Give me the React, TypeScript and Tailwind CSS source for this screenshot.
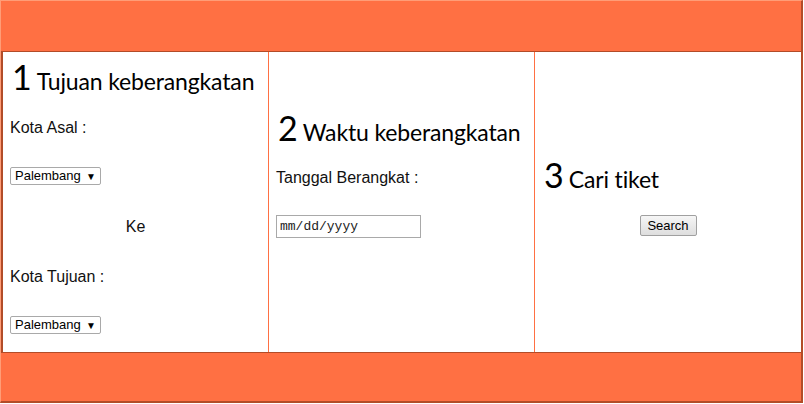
import { ReactNode } from "react";

const body = "font-['Liberation_Sans',Arial,sans-serif]";

function Heading({ num, text }: { num: string; text: string }) {
  return (
    <div className="h-[40px] leading-[40px] whitespace-nowrap font-['Lato','Open_Sans',sans-serif] [font-variant-ligatures:none] text-black">
      <span className="text-[34px] ml-[2px]">{num}</span>
      <span className="text-[23px] tracking-[-0.15px] ml-[5px]">{text}</span>
    </div>
  );
}

function Label({ children, className = "" }: { children: ReactNode; className?: string }) {
  return <div className={`${body} text-[16px] leading-[20px] text-[#111] ${className}`}>{children}</div>;
}

function CitySelect({ className = "" }: { className?: string }) {
  return (
    <div className={`relative w-[91px] h-[18px] ${className}`}>
      <select
        defaultValue="Palembang"
        className={`${body} appearance-none block w-full h-[18px] bg-white border border-[#a9a9a9] rounded-[2px] pl-[4px] text-[13px] leading-[16px] text-black outline-none`}
      >
        <option>Palembang</option>
        <option>Jakarta</option>
        <option>Bandung</option>
      </select>
      <span className="absolute right-[5px] inset-y-0 flex items-center text-[10px] text-black pointer-events-none">▼</span>
    </div>
  );
}

export default function App() {
  return (
    <div className="w-[803px] h-[403px] bg-white flex flex-col border-t border-l border-t-[#ff9d77] border-l-[#ff9d77] border-r-2 border-b-2 border-r-[#b24c28] border-b-[#b24c28]">
      <div className="h-[51px] bg-[#ff7043] border-b border-[#b24c28]" />

      <div className="h-[300px] flex border-l-2 border-[#b24c28]">
        {/* 1 */}
        <div className="w-[266px] border-r border-[#ff7043] pl-[7px] pt-[5px]">
          <Heading num="1" text="Tujuan keberangkatan" />
          <Label className="mt-[21px]">Kota Asal :</Label>
          <CitySelect className="mt-[29px]" />
          <Label className="mt-[32px] text-center pr-[7px]">Ke</Label>
          <Label className="mt-[30px]">Kota Tujuan :</Label>
          <CitySelect className="mt-[29px]" />
        </div>

        {/* 2 */}
        <div className="w-[266px] border-r border-[#ff7043] pl-[7px] pt-[56px]">
          <Heading num="2" text="Waktu keberangkatan" />
          <Label className="mt-[20px]">Tanggal Berangkat :</Label>
          <div className="mt-[27px] w-[145px] h-[23px] border border-[#a9a9a9] bg-white flex items-center pl-[3px]">
            <span className="font-['Liberation_Mono',monospace] text-[13px] text-[#222]">mm/dd/yyyy</span>
          </div>
        </div>

        {/* 3 */}
        <div className="flex-1 pl-[7px] pt-[103px]">
          <Heading num="3" text="Cari tiket" />
          <div className="mt-[20px] flex justify-center pr-[7px]">
            <button
              className={`${body} w-[57px] h-[21px] text-[13px] leading-[19px] text-black border border-[#a0a0a0] rounded-[2px] bg-gradient-to-b from-[#f6f6f6] to-[#dedede]`}
            >
              Search
            </button>
          </div>
        </div>
      </div>

      <div className="flex-1 bg-[#ff7043] border-t border-[#b24c28]" />
    </div>
  );
}
